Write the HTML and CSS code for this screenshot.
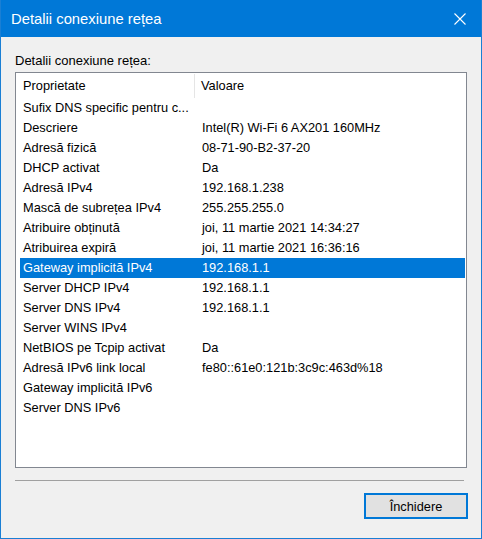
FILE: index.html
```html
<!DOCTYPE html>
<html lang="ro">
<head>
    <meta charset="UTF-8">
    <title>Detalii conexiune rețea</title>
    <link rel="stylesheet" href="styles.css">
</head>

<body>
<div class="window">
    <div class="titlebar">
        <span class="title">Detalii conexiune rețea</span>
        <svg class="close" width="12" height="12" viewBox="0 0 12 12">
            <path d="M0.5 0.5 L11.5 11.5 M11.5 0.5 L0.5 11.5" stroke="#fff" stroke-width="1.1" fill="none"/>
        </svg>
    </div>

    <div class="content">
        <div class="label">Detalii conexiune rețea:</div>

        <div class="list">
            <div class="head">
                <span class="col1">Proprietate</span>
                <span class="col2">Valoare</span>
            </div>
            <div class="row"><span class="col1">Sufix DNS specific pentru c...</span><span class="col2"></span></div>
            <div class="row"><span class="col1">Descriere</span><span class="col2">Intel(R) Wi-Fi 6 AX201 160MHz</span></div>
            <div class="row"><span class="col1">Adresă fizică</span><span class="col2">08-71-90-B2-37-20</span></div>
            <div class="row"><span class="col1">DHCP activat</span><span class="col2">Da</span></div>
            <div class="row"><span class="col1">Adresă IPv4</span><span class="col2">192.168.1.238</span></div>
            <div class="row"><span class="col1">Mască de subrețea IPv4</span><span class="col2">255.255.255.0</span></div>
            <div class="row"><span class="col1">Atribuire obținută</span><span class="col2">joi, 11 martie 2021 14:34:27</span></div>
            <div class="row"><span class="col1">Atribuirea expiră</span><span class="col2">joi, 11 martie 2021 16:36:16</span></div>
            <div class="row selected"><span class="col1">Gateway implicită IPv4</span><span class="col2">192.168.1.1</span></div>
            <div class="row"><span class="col1">Server DHCP IPv4</span><span class="col2">192.168.1.1</span></div>
            <div class="row"><span class="col1">Server DNS IPv4</span><span class="col2">192.168.1.1</span></div>
            <div class="row"><span class="col1">Server WINS IPv4</span><span class="col2"></span></div>
            <div class="row"><span class="col1">NetBIOS pe Tcpip activat</span><span class="col2">Da</span></div>
            <div class="row"><span class="col1">Adresă IPv6 link local</span><span class="col2">fe80::61e0:121b:3c9c:463d%18</span></div>
            <div class="row"><span class="col1">Gateway implicită IPv6</span><span class="col2"></span></div>
            <div class="row"><span class="col1">Server DNS IPv6</span><span class="col2"></span></div>
        </div>

        <div class="sep"></div>

        <div class="actions">
            <button class="btn">Închidere</button>
        </div>
    </div>
</div>
</body>
</html>
```

FILE: styles.css
```css
* {
    margin: 0;
    padding: 0;
    box-sizing: border-box;
}

body {
    width: 482px;
    height: 539px;
    font: 12.8px/16px "Liberation Sans", Arial, sans-serif;
    color: #000;
    background: #f0f0f0;
}

.window {
    width: 482px;
    height: 539px;
    border: 1px solid #1a7fd4;
    border-top: none;
    background: #f0f0f0;
    display: flex;
    flex-direction: column;
}

.titlebar {
    height: 37px;
    background: #0078d7;
    display: flex;
    align-items: center;
    justify-content: space-between;
    padding: 0 15px 0 10px;
}

.title {
    color: #fff;
    font-size: 14.8px;
}

.close {
    display: block;
}

.content {
    padding: 16px 13px 0 14px;
}

.label {
    height: 16px;
    margin-bottom: 3px;
    font-size: 13px;
}

.list {
    width: 452px;
    height: 396px;
    background: #fff;
    border: 1px solid #828790;
    padding: 0 0 0 4px;
}

.head {
    height: 25px;
    display: flex;
    align-items: center;
}

.head .col1 {
    height: 24px;
    line-height: 24px;
    margin-top: 1px;
    border-right: 1px solid #e5e5e5;
}

.row {
    height: 20px;
    line-height: 20px;
    display: flex;
    width: 445px;
}

.col1 {
    width: 175px;
    padding-left: 3px;
    white-space: nowrap;
    overflow: hidden;
}

.col2 {
    padding-left: 6px;
    white-space: nowrap;
}

.row .col2 {
    padding-left: 7px;
}

.selected {
    background: #0078d7;
    color: #fff;
}

.sep {
    width: 449px;
    margin-top: 12px;
    border-top: 1px solid #a0a0a0;
}

.actions {
    display: flex;
    justify-content: flex-end;
    margin-top: 12px;
    width: 453px;
}

.btn {
    width: 104px;
    height: 26px;
    background: #e1e1e1;
    border: 2px solid #0078d7;
    font: 12.8px "Liberation Sans", Arial, sans-serif;
    color: #000;
    outline: none;
}
```
